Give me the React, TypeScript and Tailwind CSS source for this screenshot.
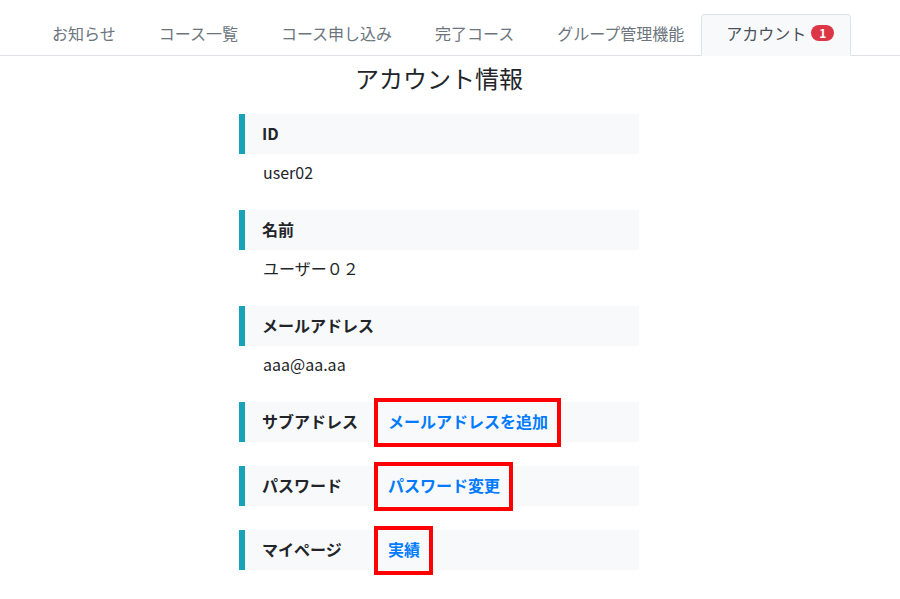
import React from "react";

const tabs = ["お知らせ", "コース一覧", "コース申し込み", "完了コース", "グループ管理機能"];

interface Field {
  label: string;
  value: string;
}

const fields: Field[] = [
  { label: "ID", value: "user02" },
  { label: "名前", value: "ユーザー０２" },
  { label: "メールアドレス", value: "aaa@aa.aa" },
];

const links: Field[] = [
  { label: "サブアドレス", value: "メールアドレスを追加" },
  { label: "パスワード", value: "パスワード変更" },
  { label: "マイページ", value: "実績" },
];

export default function App() {
  return (
    <div
      className="min-h-[599px] bg-white text-[#212529] text-base"
      style={{ fontFamily: '"Noto Sans CJK JP", "Noto Sans", sans-serif' }}
    >
      <nav className="flex border-b border-[#dee2e6] pt-[14px] pl-[26px]">
        {tabs.map((t) => (
          <a
            key={t}
            href="#"
            className="-mb-px border border-transparent pl-[25px] pr-[16px] pt-[6px] pb-[10px] leading-6 text-[#6c757d]"
          >
            {t}
          </a>
        ))}
        <a
          href="#"
          className="-mb-px flex items-center rounded-t border border-[#dee2e6] border-b-[#f8f9fa] bg-[#f8f9fa] pl-[24px] pr-[16px] pt-[6px] pb-[10px] leading-6 text-[#495057]"
        >
          アカウント
          <span className="ml-[5px] inline-flex h-4 min-w-[23px] items-center justify-center rounded-full bg-[#dc3545] px-[6px] text-xs font-bold leading-none text-white">
            1
          </span>
        </a>
      </nav>

      <main className="pr-[22px]">
        <h1 className="mt-[4px] mb-[18px] text-center text-2xl leading-9">アカウント情報</h1>

        <div className="mx-auto w-[400px]">
          {fields.map((f) => (
            <div key={f.label} className="mb-6">
              <div className="flex h-10 items-center border-l-[6px] border-[#17a2b8] bg-[#f8f9fa] pl-[17px] pb-[2px] font-bold">
                {f.label}
              </div>
              <div className="pl-6 pt-[6px] pb-[2px] leading-6">{f.value}</div>
            </div>
          ))}

          {links.map((l) => (
            <div
              key={l.label}
              className="mb-6 flex h-10 items-center border-l-[6px] border-[#17a2b8] bg-[#f8f9fa] pl-[17px]"
            >
              <span className="w-[112px] shrink-0 pb-[2px] font-bold">{l.label}</span>
              <a
                href="#"
                className="flex h-[49px] shrink-0 items-center border-4 border-[#ff0000] pl-[10px] pr-[9px] pb-[2px] font-bold text-[#007bff]"
              >
                {l.value}
              </a>
            </div>
          ))}
        </div>
      </main>
    </div>
  );
}
